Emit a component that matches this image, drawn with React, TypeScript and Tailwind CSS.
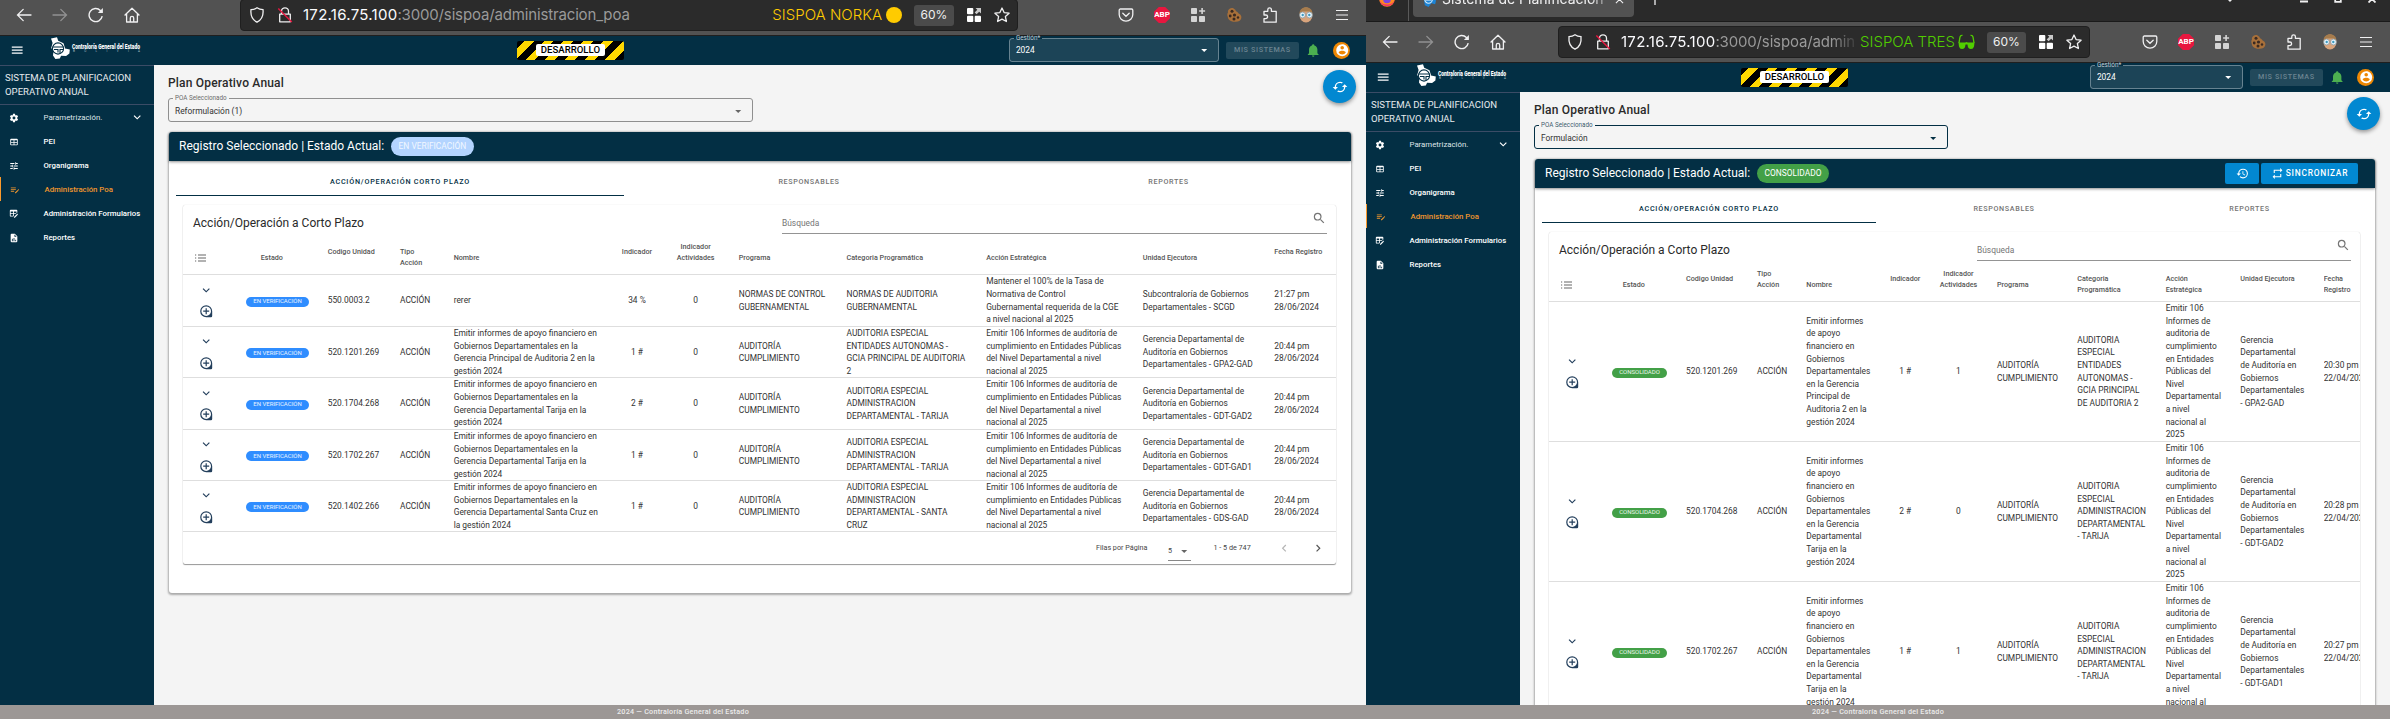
import React from "react";

const P = {
  menu: "M3,6H21V8H3V6M3,11H21V13H3V11M3,16H21V18H3V16Z",
  chevronDown: "M7.41,8.58L12,13.17L16.59,8.58L18,10L12,16L6,10L7.41,8.58Z",
  chevronLeft: "M15.41,16.58L10.83,12L15.41,7.41L14,6L8,12L14,18L15.41,16.58Z",
  chevronRight: "M8.59,16.58L13.17,12L8.59,7.41L10,6L16,12L10,18L8.59,16.58Z",
  menuDown: "M7,10L12,15L17,10H7Z",
  cog: "M12,15.5A3.5,3.5 0 0,1 8.5,12A3.5,3.5 0 0,1 12,8.5A3.5,3.5 0 0,1 15.5,12A3.5,3.5 0 0,1 12,15.5M19.43,12.97C19.47,12.65 19.5,12.33 19.5,12C19.5,11.67 19.47,11.34 19.43,11L21.54,9.37C21.73,9.22 21.78,8.95 21.66,8.73L19.66,5.27C19.54,5.05 19.27,4.96 19.05,5.05L16.56,6.05C16.04,5.66 15.5,5.32 14.87,5.07L14.5,2.42C14.46,2.18 14.25,2 14,2H10C9.75,2 9.54,2.18 9.5,2.42L9.13,5.07C8.5,5.32 7.96,5.66 7.44,6.05L4.95,5.05C4.73,4.96 4.46,5.05 4.34,5.27L2.34,8.73C2.21,8.95 2.27,9.22 2.46,9.37L4.57,11C4.53,11.34 4.5,11.67 4.5,12C4.5,12.33 4.53,12.65 4.57,12.97L2.46,14.63C2.27,14.78 2.21,15.05 2.34,15.27L4.34,18.73C4.46,18.95 4.73,19.03 4.95,18.95L7.44,17.94C7.96,18.34 8.5,18.68 9.13,18.93L9.5,21.58C9.54,21.82 9.75,22 10,22H14C14.25,22 14.46,21.82 14.5,21.58L14.87,18.93C15.5,18.67 16.04,18.34 16.56,17.94L19.05,18.95C19.27,19.03 19.54,18.95 19.66,18.73L21.66,15.27C21.78,15.05 21.73,14.78 21.54,14.63L19.43,12.97Z",
  table: "M5,4H19A2,2 0 0,1 21,6V18A2,2 0 0,1 19,20H5A2,2 0 0,1 3,18V6A2,2 0 0,1 5,4M5,8V12H11V8H5M13,8V12H19V8H13M5,14V18H11V14H5M13,14V18H19V14H13Z",
  tune: "M3,17V19H9V17H3M3,5V7H13V5H3M13,21V19H21V17H13V15H11V21H13M7,9V11H3V13H7V15H9V9H7M21,13V11H11V13H21M15,9H17V7H21V5H17V3H15V9Z",
  playlistEdit: "M2,6V8H14V6H2M2,10V12H14V10H2M20.04,10.13C19.9,10.13 19.76,10.19 19.65,10.3L18.65,11.3L20.7,13.35L21.7,12.35C21.92,12.14 21.92,11.79 21.7,11.58L20.42,10.3C20.31,10.19 20.18,10.13 20.04,10.13M18.07,11.88L12,17.94V20H14.06L20.12,13.93L18.07,11.88M2,14V16H10V14H2Z",
  tableEdit: "M21.7,13.35L20.7,14.35L18.65,12.3L19.65,11.3C19.86,11.08 20.21,11.08 20.42,11.3L21.7,12.58C21.92,12.79 21.92,13.14 21.7,13.35M12,18.94L18.07,12.88L20.12,14.93L14.06,21H12V18.94M4,2H18A2,2 0 0,1 20,4V8.17L16.17,12H12V16.17L10.17,18H4A2,2 0 0,1 2,16V4A2,2 0 0,1 4,2M4,6V10H10V6H4M12,6V10H18V6H12M4,12V16H10V12H4Z",
  fileChart: "M13,9H18.5L13,3.5V9M6,2H14L20,8V20A2,2 0 0,1 18,22H6C4.89,22 4,21.1 4,20V4C4,2.89 4.89,2 6,2M7,20H9V14H7V20M11,20H13V12H11V20M15,20H17V16H15V20Z",
  bell: "M21,19V20H3V19L5,17V11C5,7.9 7.03,5.17 10,4.29C10,4.19 10,4.1 10,4A2,2 0 0,1 12,2A2,2 0 0,1 14,4C14,4.1 14,4.19 14,4.29C16.97,5.17 19,7.9 19,11V17L21,19M14,21A2,2 0 0,1 12,23A2,2 0 0,1 10,21",
  account: "M12,19.2C9.5,19.2 7.29,17.92 6,16C6.03,14 10,12.9 12,12.9C14,12.9 17.97,14 18,16C16.71,17.92 14.5,19.2 12,19.2M12,5A3,3 0 0,1 15,8A3,3 0 0,1 12,11A3,3 0 0,1 9,8A3,3 0 0,1 12,5M12,2A10,10 0 0,0 2,12A10,10 0 0,0 12,22A10,10 0 0,0 22,12C22,6.47 17.5,2 12,2Z",
  cached: "M19,8L15,12H18A6,6 0 0,1 12,18C11,18 10.03,17.75 9.2,17.3L7.74,18.76C8.97,19.54 10.43,20 12,20A8,8 0 0,0 20,12H23M6,12A6,6 0 0,1 12,6C13,6 13.97,6.25 14.8,6.7L16.26,5.24C15.03,4.46 13.57,4 12,4A8,8 0 0,0 4,12H1L5,16L9,12",
  history: "M13.5,8H12V13L16.28,15.54L17,14.33L13.5,12.25V8M13,3A9,9 0 0,0 4,12H1L4.96,16.03L9,12H6A7,7 0 0,1 13,5A7,7 0 0,1 20,12A7,7 0 0,1 13,19C11.07,19 9.32,18.21 8.06,16.94L6.64,18.36C8.27,20 10.5,21 13,21A9,9 0 0,0 22,12A9,9 0 0,0 13,3",
  repeat: "M17,17H7V14L3,18L7,22V19H19V13H17M7,7H17V10L21,6L17,2V5H5V11H7V7Z",
  magnify: "M9.5,3A6.5,6.5 0 0,1 16,9.5C16,11.11 15.41,12.59 14.44,13.73L14.71,14H15.5L20.5,19L19,20.5L14,15.5V14.71L13.73,14.44C12.59,15.41 11.11,16 9.5,16A6.5,6.5 0 0,1 3,9.5A6.5,6.5 0 0,1 9.5,3M9.5,5C7,5 5,7 5,9.5C5,12 7,14 9.5,14C12,14 14,12 14,9.5C14,7 12,5 9.5,5Z",
  loupe: "M13,7H11V11H7V13H11V17H13V13H17V11H13V7M12,2A10,10 0 0,0 2,12A10,10 0 0,0 12,22H20A2,2 0 0,0 22,20V12A10,10 0 0,0 12,2M12,20A8,8 0 0,1 4,12A8,8 0 0,1 12,4A8,8 0 0,1 20,12A8,8 0 0,1 12,20",
};

function Icon({ d, className = "size-[14.4px]" }: { d: string; className?: string }) {
  return (
    <svg viewBox="0 0 24 24" className={`shrink-0 fill-current ${className}`}>
      <path d={d} />
    </svg>
  );
}

type Row = { state: string; cells: string[] };

type WindowConfig = {
  id: "left" | "right";
  bookmark: React.ReactNode;
  url: string;
  urlClass: string;
  width: string;
  urlBar: string;
  badgeGap: string;
  selectGap: string;
  selectWidth: string;
  poa: string;
  poaBox: string;
  poaLabel: string;
  chip: string;
  chipClass: string;
  rowChip: string;
  tabs: string;
  search: string;
  grid: string;
  cols: string[];
  headers: { t: string; c: string }[];
  rows: Row[];
  rowHeights: string[];
  card: string;
};

const S = "stroke-[#f0f0f1] fill-none";

function BackForward({ flip }: { flip?: boolean }) {
  return (
    <svg viewBox="0 0 16 16" className={flip ? "size-4 -scale-x-100 opacity-40" : "size-4"}>
      <path d="M15 8H1.6M7.2 2.4L1.5 8l5.7 5.6" className={S} strokeWidth="1.3" strokeLinecap="round" />
    </svg>
  );
}

function Toolbar({ w }: { w: WindowConfig }) {
  return (
    <div className="flex h-[41px] shrink-0 items-center border-b border-[#1f1f1f] bg-[#525252] pl-4">
      <div className="flex items-center gap-5">
        <BackForward />
        <BackForward flip />
        <svg viewBox="0 0 16 16" className="size-4">
          <path d="M14.2 9.2A6.6 6.6 0 1 1 12.4 3.4L14 5" className={S} strokeWidth="1.4" />
          <path d="M14.9 1v5H9.9z" fill="#f0f0f1" />
        </svg>
        <svg viewBox="0 0 16 16" className="size-4">
          <path d="M1 8L8 1.2 15 8M2.6 6.8V15h10.8V6.8M6.3 15v-4a1.7 1.7 0 0 1 3.4 0v4" className={S} strokeWidth="1.3" strokeLinejoin="round" strokeLinecap="round" />
        </svg>
      </div>
      <div className={`flex h-8 items-center rounded-[4px] border border-[#1f1f1f] bg-[#2b2b2b] pl-2 ${w.urlBar}`}>
        <svg viewBox="0 0 16 16" className="size-4 shrink-0">
          <path d="M8 .8c2 1.4 4 1.8 6 1.9.6 5.800-1.300 10.200-6 12.500C3.300 12.900 1.400 8.500 2 2.700 4 2.600 6 2.200 8 .8z" className={S} strokeWidth="1.3" />
        </svg>
        <svg viewBox="0 0 16 16" className="ml-3 size-4 shrink-0">
          <path d="M4.500 7V4.300a3.500 3.500 0 0 1 7 0V7M2.700 7.200h10.600v7.600H2.700z" className={S} strokeWidth="1.3" strokeLinejoin="round" />
          <path d="M1.300 1.500L14.800 15" stroke="#e8173f" strokeWidth="1.4" />
        </svg>
        <div className={`ml-[10px] whitespace-nowrap font-['Inter',sans-serif] text-[15px] leading-5 tracking-[-0.150px] text-[#9a9a9a] ${w.urlClass}`}>
          <span className="tracking-[0.270px] text-[#fbfbfe]">172.16.75.100</span>
          {w.url}
        </div>
        {w.bookmark}
        <div className="flex h-[21px] w-[40px] items-center justify-center rounded-[3px] bg-[#4b4b4b] font-['Inter',sans-serif] text-[12px] text-[#f0f0f1]">60%</div>
        <svg viewBox="0 0 14 14" className="ml-[13px] size-[14px] shrink-0" fill="#fff">
          <rect x="0" y="0" width="6.300" height="6.300" rx="1" />
          <rect x="0" y="7.700" width="6.300" height="6.300" rx="1" />
          <rect x="7.700" y="7.700" width="6.300" height="6.300" rx="1" />
          <path d="M8.500 0H14v5.500l-1.800-1.800-2.600 2.600-1.900-1.900 2.600-2.600z" opacity=".75" />
        </svg>
        <svg viewBox="0 0 16 16" className="ml-[13px] mr-[7px] size-4 shrink-0">
          <path d="M8 1l2.100 4.600 5 .6-3.700 3.400 1 4.900L8 12.100l-4.400 2.400 1-4.900L.9 6.200l5-.6z" className={S} strokeWidth="1.3" strokeLinejoin="round" />
        </svg>
      </div>
      <div className="ml-auto mr-4 flex items-center gap-5">
        <svg viewBox="0 0 16 16" className="size-4">
          <path d="M2.400 2h11.200a1.200 1.200 0 0 1 1.200 1.200v4.400a6.800 6.500 0 0 1-13.600 0V3.200A1.200 1.200 0 0 1 2.400 2zM4.800 6.200L8 9.300l3.200-3.100" className={S} strokeWidth="1.300" strokeLinecap="round" />
        </svg>
        <div className="flex size-4 items-center justify-center bg-[#e8173f] font-['Roboto',sans-serif] text-[8px] font-bold text-white [clip-path:polygon(30%_0,70%_0,100%_30%,100%_70%,70%_100%,30%_100%,0_70%,0_30%)]">ABP</div>
        <svg viewBox="0 0 16 16" className="size-4" fill="#d4d4d4">
          <rect x="1" y="1" width="6" height="6" rx=".8" />
          <rect x="1" y="9" width="6" height="6" rx=".8" />
          <rect x="9" y="9" width="6" height="6" rx=".8" />
          <path d="M11.300 1h1.600v2.200h2.200v1.600h-2.200V7h-1.600V4.800H9.100V3.200h2.200z" />
        </svg>
        <svg viewBox="0 0 16 16" className="size-4">
          <path d="M4 1.500c1.500-1 3.500-.5 4.500.8 1 .2 1 1.700 2 2.200 1.500.3 1.500 2 3 2.500 1.500 1 2.300 2.500 1.700 4.500-.8 2.300-3 3.500-6 3.300C5.500 15 2 13 1.800 10 1 8 1.300 6.500 2 5.500 1.500 4 2.500 2.300 4 1.500z" fill="#a8703a" />
          <circle cx="6" cy="4.200" r="1.500" fill="#3a2a22" />
          <circle cx="4.200" cy="9" r="1.400" fill="#3a2a22" />
          <circle cx="8.500" cy="8" r="1.600" fill="#3a2a22" />
          <circle cx="8" cy="12" r="1.500" fill="#3a2a22" />
          <circle cx="12" cy="10.500" r="1.200" fill="#3a2a22" />
        </svg>
        <svg viewBox="0 0 16 16" className="size-4">
          <path d="M2 4.300h3.800V2.600a1.800 1.800 0 0 1 3.600 0v1.700h4.800v10.900H2v-3.600h1.800a1.800 1.800 0 0 0 0-3.600H2z" className={S} strokeWidth="1.300" strokeLinejoin="round" />
        </svg>
        <svg viewBox="0 0 16 16" className="size-4">
          <ellipse cx="8" cy="8" rx="6.500" ry="7.500" fill="#d9a47c" />
          <path d="M1.500 7C1.500 2.500 4.500.3 8 .3S14.500 2.500 14.500 7L12 4.500H4z" fill="#a67c4d" />
          <circle cx="4.500" cy="8" r="2.900" fill="#e9f4fa" stroke="#6f8794" strokeWidth=".6" />
          <circle cx="11.500" cy="8" r="2.900" fill="#e9f4fa" stroke="#6f8794" strokeWidth=".6" />
          <circle cx="4.700" cy="8" r="1.200" fill="#3e9ac0" />
          <circle cx="11.300" cy="8" r="1.200" fill="#3e9ac0" />
        </svg>
        <svg viewBox="0 0 16 16" className="size-4">
          <path d="M2 3.500h12M2 8h12M2 12.500h12" className={S} strokeWidth="1.200" />
        </svg>
      </div>
    </div>
  );
}

function Favicon() {
  return (
    <svg viewBox="0 0 16 16" className="size-[15px] shrink-0">
      <path d="M2 1h8l1 5 4 3-1 4-4-1-3 4-4-2-1-6z" fill="#1c84d6" />
      <circle cx="7" cy="8" r="4" fill="none" stroke="#d8ecfa" strokeWidth="1.200" />
      <path d="M4 8.500h6" stroke="#d8ecfa" strokeWidth="1.300" />
    </svg>
  );
}

function TabStrip() {
  return (
    <div className="flex h-[22px] shrink-0 items-end overflow-hidden border-b border-[#1a1a1a] bg-[#2a2a2a]">
      <div className="flex h-[44px] flex-1 items-center">
        <div className="flex h-full w-[43px] items-center justify-center border-r border-[#5a5a5a]">
          <svg viewBox="0 0 16 16" className="size-4">
            <circle cx="8" cy="8" r="7.800" fill="#ff8a1f" />
            <path d="M.5 9a7.600 7.600 0 0 0 15 0c-1 3-4 4.500-7.500 4.500S1.500 12 .5 9z" fill="#f5326a" />
            <circle cx="8" cy="8.500" r="3.800" fill="#7b45e0" />
          </svg>
        </div>
        <div className="ml-[4px] flex h-[36px] w-[221px] items-center rounded-[4px] bg-[#525252] pl-[9px] pr-[10px]">
          <Favicon />
          <div className="ml-[5px] w-[169px] overflow-hidden whitespace-nowrap font-['Inter',sans-serif] text-[14px] leading-5 text-[#f0f0f1] [mask-image:linear-gradient(to_right,black_88%,transparent_102%)]">
            Sistema de Planificación
          </div>
          <svg viewBox="0 0 10 10" className="ml-[4px] size-[9px] shrink-0">
            <path d="M1 1l8 8M9 1L1 9" className={S} strokeWidth="1.200" />
          </svg>
        </div>
        <svg viewBox="0 0 12 12" className="ml-[15px] size-3">
          <path d="M6 0v12M0 6h12" className={S} strokeWidth="1.300" />
        </svg>
        <div className="ml-auto mr-[14px] flex items-center">
          <svg viewBox="0 0 8 6" className="mr-[66px] h-[6px] w-[8px]">
            <path d="M.5 1.500L4 5l3.500-3.500" className={S} strokeWidth="1.400" />
          </svg>
          <svg viewBox="0 0 8 8" className="mr-[26px] size-2">
            <path d="M0 6.500h8" className={S} strokeWidth="2" />
          </svg>
          <svg viewBox="0 0 8 8" className="mr-[26px] size-2">
            <path d="M1.200 1.200h5.600v5.600H1.200z" className={S} strokeWidth="1.800" />
          </svg>
          <svg viewBox="0 0 8 8" className="size-2">
            <path d="M.5.5l7 7M7.500.5l-7 7" className={S} strokeWidth="1.800" />
          </svg>
        </div>
      </div>
    </div>
  );
}

function Logo() {
  return (
    <svg viewBox="0 0 91 22" className="mt-[-6px] h-[22px] w-[91px] shrink-0">
      <path d="M1 1.500L7 .2l1.200 3.600 5.300 2.400 1.600 5.300 4.700 1-.4 4-3.300 2.600-5-.3-1.300 2.600-4.400.5L3 18.500l.5-4.500-2.300-3L2.600 6z" fill="#fff" />
      <circle cx="8" cy="11.500" r="5.600" fill="none" stroke="#032f44" strokeWidth="1.100" />
      <path d="M3 10h10.500M4 12.500h4v3M10 16v-3.500h3" fill="none" stroke="#032f44" strokeWidth="1.100" />
      <text x="22" y="11.500" textLength="68" lengthAdjust="spacingAndGlyphs" fill="#fff" className="font-['Roboto',sans-serif] text-[7px] font-black">
        Contraloría General del Estado
      </text>
      <text x="23" y="15.300" textLength="67" fill="#a9bac3" className="font-['Roboto',sans-serif] text-[3px]">
        BOLIVIA
      </text>
    </svg>
  );
}

function Header({ w }: { w: WindowConfig }) {
  return (
    <div className="flex h-[29px] shrink-0 items-center bg-[#032f44] text-white">
      <Icon d={P.menu} className="ml-[9.500px] mr-[26px] size-[14.400px]" />
      <Logo />
      <div className={`flex h-[19px] w-[107px] shrink-0 items-center justify-center rounded-[2px] bg-[repeating-linear-gradient(-45deg,#000_0,#000_7px,#ffd800_7px,#ffd800_14px)] ${w.badgeGap}`}>
        <span className="mb-[2px] rounded-[2px] bg-white px-[5px] text-[9.600px] font-medium leading-[12px] text-black">DESARROLLO</span>
      </div>
      <fieldset className={`mt-[-3px] flex h-[26px] shrink-0 rounded-[3px] border border-[#668290] ${w.selectGap} ${w.selectWidth}`}>
        <legend className="ml-[4px] px-[2px] text-[6.300px] leading-[5px] text-[#c3ced4]">Gestión*</legend>
        <div className="-mt-[2px] flex h-[22px] w-full items-center justify-between bg-white/10 pl-[6px] pr-[7px] text-[8.400px]">
          <span>2024</span>
          <Icon d={P.menuDown} />
        </div>
      </fieldset>
      <div className="ml-[7px] flex h-[17px] w-[73px] items-center justify-center rounded-[2px] bg-[#22495b] text-[7.200px] font-medium tracking-[0.640px] text-[#6b8491]">MIS SISTEMAS</div>
      <Icon d={P.bell} className="ml-[7px] size-[14.400px] text-[#4caf50]" />
      <div className="ml-[13px] flex size-[17px] items-center justify-center rounded-full bg-[#fb8c00]/95">
        <Icon d={P.account} className="size-[14.400px]" />
      </div>
    </div>
  );
}

const NAV = [
  { t: "Parametrización.", d: P.cog },
  { t: "PEI", d: P.table },
  { t: "Organigrama", d: P.tune },
  { t: "Administración Poa", d: P.playlistEdit },
  { t: "Administración Formularios", d: P.tableEdit },
  { t: "Reportes", d: P.fileChart },
];

function Sidebar() {
  return (
    <div className="w-[154px] shrink-0 border-t border-[#3b4c66] bg-[#032f44] text-white">
      <div className="h-[39px] border-b border-[#3b4c66] pl-[5px] pt-[5px] text-[9.600px] leading-[14px] text-[#e6ebee]">
        SISTEMA DE PLANIFICACION
        <br />
        OPERATIVO ANUAL
      </div>
      {NAV.map((n, i) => (
        <div
          key={n.t}
          className={
            i === 3
              ? "flex h-6 items-center border-l border-[#fb9a2c] pl-[9px] pt-px text-[7.800px] font-medium text-[#f0962e]"
              : "flex h-6 items-center pl-[9px] pt-px text-[7.800px] font-medium"
          }
        >
          <Icon d={n.d} className="size-[10px]" />
          <span className={i === 0 ? "ml-[24.500px] font-normal text-[#dfe5e9]" : "ml-[24.500px]"}>{n.t}</span>
          {i === 0 && <Icon d={P.chevronDown} className="ml-auto mr-[10px] size-[14.400px]" />}
        </div>
      ))}
    </div>
  );
}

function TableRow({ w, row, h }: { w: WindowConfig; row: Row; h: string }) {
  return (
    <div className={`grid shrink-0 items-center overflow-hidden border-b border-[#dedede] text-[8.400px] leading-[12.600px] text-[#333] ${w.grid} ${h}`}>
      <div className="flex flex-col items-center gap-[7px] text-[#233f5c]">
        <Icon d={P.chevronDown} />
        <Icon d={P.loupe} />
      </div>
      <div className={`flex justify-center pt-[2px] ${w.cols[0]}`}>
        <span className={`flex h-[10px] items-center rounded-full px-[6.900px] text-[6px] text-white/90 ${w.rowChip}`}>{row.state}</span>
      </div>
      {row.cells.map((c, i) => (
        <div key={i} className={`whitespace-pre ${w.cols[i + 1]}`}>
          {c}
        </div>
      ))}
    </div>
  );
}

function Page({ w }: { w: WindowConfig }) {
  const right = w.id === "right";
  return (
    <div className="relative flex min-w-0 flex-1 flex-col overflow-hidden bg-[#f4f4f4] px-[14px]">
      <div className="absolute right-[10px] top-[5px] flex size-[33px] items-center justify-center rounded-full bg-[#0288d1] text-white shadow-[0_2px_4px_rgba(0,0,0,0.400)]">
        <Icon d={P.cached} className="size-[16px]" />
      </div>
      <h1 className="mt-[9px] h-[17px] shrink-0 text-[12px] font-medium leading-[18px] tracking-[0.190px] text-[#2a2a2a]">Plan Operativo Anual</h1>
      <fieldset className={`mt-[3px] flex h-[28px] shrink-0 rounded-[3px] border ${w.poaBox}`}>
        <legend className={`ml-[4px] px-[2px] text-[6.300px] leading-[8px] ${w.poaLabel}`}>POA Seleccionado</legend>
        <div className="-mt-[1px] flex h-[20px] w-full items-center justify-between pl-[6px] pr-[7px] text-[8.400px] text-[#333]">
          <span>{w.poa}</span>
          <Icon d={P.menuDown} className={right ? "size-[14.400px] text-[#032f44]" : "size-[14.400px] text-[#666]"} />
        </div>
      </fieldset>
      <div className={`ml-px mr-px mt-[10px] flex shrink-0 flex-col rounded-[3px] bg-white shadow-[0_1px_2px_1px_rgba(0,0,0,0.300)] ${w.card}`}>
        <div className="flex h-[29px] shrink-0 items-center rounded-t-[3px] bg-[#032f44] pl-[10px] text-[12px] text-white shadow-[0_1px_3px_rgba(0,0,0,0.450)]">
          <span className="mt-[-2px] w-[212px] whitespace-nowrap">Registro Seleccionado | Estado Actual:</span>
          <span className={`flex h-[19px] items-center rounded-full text-[8.400px] ${w.chipClass}`}>{w.chip}</span>
          {right && (
            <div className="ml-auto mr-[17px] flex gap-[2px]">
              <div className="flex h-[21px] w-[34px] items-center justify-center rounded-[2px] bg-[#0288d1]">
                <Icon d={P.history} className="size-[13px]" />
              </div>
              <div className="flex h-[21px] w-[97px] items-center justify-center gap-[2px] rounded-[2px] bg-[#0288d1] text-[8.400px] font-medium tracking-[0.750px]">
                <Icon d={P.repeat} className="size-[13px]" />
                SINCRONIZAR
              </div>
            </div>
          )}
        </div>
        <div className={`ml-[7px] grid h-[35px] shrink-0 text-center text-[7.200px] font-medium leading-[42px] tracking-[0.640px] text-[#757575] ${w.tabs}`}>
          <div className="h-[35px] border-b border-[#032f44] tracking-[0.800px] text-[#032f44]">ACCIÓN/OPERACIÓN CORTO PLAZO</div>
          <div>RESPONSABLES</div>
          <div>REPORTES</div>
        </div>
        <div className="ml-[14px] mr-[15px] mt-[9px] flex flex-col rounded-[2px] shadow-[0_1px_1px_rgba(0,0,0,0.400),0_0_1px_rgba(0,0,0,0.200)]">
          <div className="flex h-[29px] shrink-0 pl-[10px] pr-[9px]">
            <div className="mt-[9px] h-[18px] flex-1 text-[12px] leading-[19px] text-[#2a2a2a]">Acción/Operación a Corto Plazo</div>
            <div className={`flex items-center justify-between border-b border-[#949494] pt-[8px] text-[8.400px] text-[#757575] ${w.search}`}>
              <span>Búsqueda</span>
              <Icon d={P.magnify} className="-mt-[9px] mr-[1px] size-[14.400px]" />
            </div>
          </div>
          <div className={`grid h-[41px] shrink-0 border-b border-[#dedede] text-[7.200px] font-medium leading-[11px] text-[#555] ${w.grid}`}>
            <div className="pl-[11px] pt-[19px]">
              <svg viewBox="0 0 15 10" className="h-[10px] w-[15px]">
                <path d="M1 2h1.200M1 5h1.200M1 8h1.200M4 2h8M4 5h8M4 8h8" stroke="#666" strokeWidth="1.100" />
              </svg>
            </div>
            {w.headers.map((h, i) => (
              <div key={i} className={`whitespace-pre ${i === 0 ? "text-center" : w.cols[i]} ${h.c}`}>
                {h.t}
              </div>
            ))}
          </div>
          {w.rows.map((r, i) => (
            <TableRow key={i} w={w} row={r} h={w.rowHeights[i]} />
          ))}
          {!right && (
            <div className="flex h-[32px] items-center pt-px text-[7.200px] text-[#444]">
              <span className="ml-[913px] w-[72px]">Filas por Página</span>
              <div className="mt-[6px] flex h-[19px] w-[23px] items-center justify-between border-b border-[#888]">
                <span>5</span>
                <Icon d={P.menuDown} className="size-[14.400px] text-[#666]" />
              </div>
              <span className="ml-[22.500px] w-[63px]">1 - 5 de 747</span>
              <Icon d={P.chevronLeft} className="size-[14.400px] text-[#b5b5b5]" />
              <Icon d={P.chevronRight} className="ml-[20px] size-[14.400px] text-[#555]" />
            </div>
          )}
        </div>
      </div>
    </div>
  );
}

const c = "text-center";
const A = "pt-[7px]";
const B = "pt-[12px]";
const C = "pt-[18px]";

const strategic = "Emitir 106 Informes de auditoría de\ncumplimiento en Entidades Públicas\ndel Nivel Departamental a nivel\nnacional al 2025";
const strategicNarrow = "Emitir 106\nInformes de\nauditoria de\ncumplimiento\nen Entidades\nPúblicas del\nNivel\nDepartamental\na nivel\nnacional al\n2025";
const nameNarrow = "Emitir informes\nde apoyo\nfinanciero en\nGobiernos\nDepartamentales\nen la Gerencia\n";

const LEFT: WindowConfig = {
  id: "left",
  width: "w-[1366px]",
  url: ":3000/sispoa/administracion_poa",
  urlClass: "flex-1",
  bookmark: (
    <div className="mr-[12px] flex items-center font-['Inter',sans-serif] text-[15px] font-light text-[#ffcb00]">
      SISPOA NORKA
      <span className="ml-[4px] size-4 rounded-full bg-[#ffcb00]" />
    </div>
  ),
  urlBar: "ml-[100px] w-[778px]",
  badgeGap: "ml-[376px]",
  selectGap: "ml-[385px]",
  selectWidth: "w-[210px]",
  poa: "Reformulación (1)",
  poaBox: "w-[585px] border-[#8f8f8f]",
  poaLabel: "text-[#6b6b6b]",
  chip: "EN VERIFICACIÓN",
  chipClass: "bg-[#b3d4ff] px-[7.600px] text-[#f1f7ff]",
  rowChip: "bg-[#2f8dff]",
  tabs: "grid-cols-[448px_370px_349px]",
  search: "w-[545px]",
  grid: "grid-cols-[46px_98.700px_72.300px_53.700px_156.300px_54px_63.400px_119.200px_139.600px_156.600px_131.600px_61.600px]",
  cols: [`${c} pr-[1.700px]`, "", "", "", c, c, "pl-[11.400px]", "", "", "", ""],
  headers: [
    { t: "Estado", c: "pt-[18px] pr-[13px]" },
    { t: "Codigo Unidad", c: B },
    { t: "Tipo\nAcción", c: B },
    { t: "Nombre", c: C },
    { t: "Indicador", c: B },
    { t: "Indicador\nActividades", c: A },
    { t: "Programa", c: C },
    { t: "Categoria Programática", c: C },
    { t: "Acción Estratégica", c: C },
    { t: "Unidad Ejecutora", c: C },
    { t: "Fecha Registro", c: B },
  ],
  rows: [
    { state: "EN VERIFICACIÓN", cells: ["550.0003.2", "ACCIÓN", "rerer", "34 %", "0", "NORMAS DE CONTROL\nGUBERNAMENTAL", "NORMAS DE AUDITORIA\nGUBERNAMENTAL", "Mantener el 100% de la Tasa de\nNormativa de Control\nGubernamental requerida de la CGE\na nivel nacional al 2025", "Subcontraloría de Gobiernos\nDepartamentales - SCGD", "21:27 pm\n28/06/2024"] },
    { state: "EN VERIFICACIÓN", cells: ["520.1201.269", "ACCIÓN", "Emitir informes de apoyo financiero en\nGobiernos Departamentales en la\nGerencia Principal de Auditoria 2 en la\ngestión 2024", "1 #", "0", "AUDITORÍA\nCUMPLIMIENTO", "AUDITORIA ESPECIAL\nENTIDADES AUTONOMAS -\nGCIA PRINCIPAL DE AUDITORIA\n2", strategic, "Gerencia Departamental de\nAuditoría en Gobiernos\nDepartamentales - GPA2-GAD", "20:44 pm\n28/06/2024"] },
    { state: "EN VERIFICACIÓN", cells: ["520.1704.268", "ACCIÓN", "Emitir informes de apoyo financiero en\nGobiernos Departamentales en la\nGerencia Departamental Tarija en la\ngestión 2024", "2 #", "0", "AUDITORÍA\nCUMPLIMIENTO", "AUDITORIA ESPECIAL\nADMINISTRACION\nDEPARTAMENTAL - TARIJA", strategic, "Gerencia Departamental de\nAuditoría en Gobiernos\nDepartamentales - GDT-GAD2", "20:44 pm\n28/06/2024"] },
    { state: "EN VERIFICACIÓN", cells: ["520.1702.267", "ACCIÓN", "Emitir informes de apoyo financiero en\nGobiernos Departamentales en la\nGerencia Departamental Tarija en la\ngestión 2024", "1 #", "0", "AUDITORÍA\nCUMPLIMIENTO", "AUDITORIA ESPECIAL\nADMINISTRACION\nDEPARTAMENTAL - TARIJA", strategic, "Gerencia Departamental de\nAuditoría en Gobiernos\nDepartamentales - GDT-GAD1", "20:44 pm\n28/06/2024"] },
    { state: "EN VERIFICACIÓN", cells: ["520.1402.266", "ACCIÓN", "Emitir informes de apoyo financiero en\nGobiernos Departamentales en la\nGerencia Departamental Santa Cruz en\nla gestión 2024", "1 #", "0", "AUDITORÍA\nCUMPLIMIENTO", "AUDITORIA ESPECIAL\nADMINISTRACION\nDEPARTAMENTAL - SANTA\nCRUZ", strategic, "Gerencia Departamental de\nAuditoría en Gobiernos\nDepartamentales - GDS-GAD", "20:44 pm\n28/06/2024"] },
  ],
  rowHeights: ["h-[52px]", "h-[51px]", "h-[52px]", "h-[51px]", "h-[51px]"],
  card: "h-[461px]",
};

const RIGHT: WindowConfig = {
  id: "right",
  width: "w-[1024px]",
  url: ":3000/sispoa/admin",
  urlClass: "w-[239px] shrink-0 [mask-image:linear-gradient(to_right,black_88%,transparent_100%)]",
  bookmark: (
    <div className="ml-auto mr-[12px] flex items-center whitespace-nowrap font-['Inter',sans-serif] text-[15px] font-light text-[#51cd00]">
      SISPOA TRES
      <svg viewBox="0 0 17 16" className="ml-[3px] h-4 w-[17px]">
        <path d="M1 9L2 3q.5-2 2.500-1.600M16 9l-1-6q-.5-2-2.500-1.600" fill="none" stroke="#51cd00" strokeWidth="1.300" />
        <path d="M.5 8.500h6.700q1.300-1 2.600 0h6.700l-.5 4q-.6 2.500-3 2.500-3.300 0-3.500-4.500h-2Q7.300 15 4 15q-2.400 0-3-2.500z" fill="#51cd00" />
      </svg>
    </div>
  ),
  urlBar: "ml-[52px] w-[532px]",
  badgeGap: "ml-[234px]",
  selectGap: "ml-[242px]",
  selectWidth: "w-[153px]",
  poa: "Formulación",
  poaBox: "w-[414px] border-[#032f44]",
  poaLabel: "text-[#032f44]/80",
  chip: "CONSOLIDADO",
  chipClass: "bg-[#43a047] px-[7.600px] text-white",
  rowChip: "bg-[#43a047]",
  tabs: "grid-cols-[334px_256px_235px]",
  search: "w-[374px]",
  grid: "grid-cols-[46.600px_90.400px_71px_49.300px_72px_54px_52.400px_92.600px_88.400px_74.600px_83.400px_36.300px]",
  cols: [`${c} pr-[2.600px]`, "", "", "", c, c, "pl-[12.300px]", "", "", "", "overflow-hidden"],
  headers: [
    { t: "Estado", c: "pt-[18px] pr-[14px]" },
    { t: "Codigo Unidad", c: B },
    { t: "Tipo\nAcción", c: A },
    { t: "Nombre", c: C },
    { t: "Indicador", c: B },
    { t: "Indicador\nActividades", c: A },
    { t: "Programa", c: C },
    { t: "Categoria\nProgramática", c: B },
    { t: "Acción\nEstratégica", c: B },
    { t: "Unidad Ejecutora", c: B },
    { t: "Fecha\nRegistro", c: B },
  ],
  rows: [
    { state: "CONSOLIDADO", cells: ["520.1201.269", "ACCIÓN", nameNarrow + "Principal de\nAuditoria 2 en la\ngestión 2024", "1 #", "1", "AUDITORÍA\nCUMPLIMIENTO", "AUDITORIA\nESPECIAL\nENTIDADES\nAUTONOMAS -\nGCIA PRINCIPAL\nDE AUDITORIA 2", strategicNarrow, "Gerencia\nDepartamental\nde Auditoría en\nGobiernos\nDepartamentales\n- GPA2-GAD", "20:30 pm\n22/04/2024"] },
    { state: "CONSOLIDADO", cells: ["520.1704.268", "ACCIÓN", nameNarrow + "Departamental\nTarija en la\ngestión 2024", "2 #", "0", "AUDITORÍA\nCUMPLIMIENTO", "AUDITORIA\nESPECIAL\nADMINISTRACION\nDEPARTAMENTAL\n- TARIJA", strategicNarrow, "Gerencia\nDepartamental\nde Auditoría en\nGobiernos\nDepartamentales\n- GDT-GAD2", "20:28 pm\n22/04/2024"] },
    { state: "CONSOLIDADO", cells: ["520.1702.267", "ACCIÓN", nameNarrow + "Departamental\nTarija en la\ngestión 2024", "1 #", "1", "AUDITORÍA\nCUMPLIMIENTO", "AUDITORIA\nESPECIAL\nADMINISTRACION\nDEPARTAMENTAL\n- TARIJA", strategicNarrow, "Gerencia\nDepartamental\nde Auditoría en\nGobiernos\nDepartamentales\n- GDT-GAD1", "20:27 pm\n22/04/2024"] },
  ],
  rowHeights: ["h-[140px]", "h-[140px]", "h-[140px]"],
  card: "h-[620px]",
};

function BrowserWindow({ w }: { w: WindowConfig }) {
  return (
    <div className={`flex h-[719px] shrink-0 flex-col overflow-hidden ${w.width}`}>
      {w.id === "right" ? <TabStrip /> : <div className="-mt-[5px]" />}
      <Toolbar w={w} />
      <Header w={w} />
      <div className="flex min-h-0 flex-1 overflow-hidden">
        <Sidebar />
        <Page w={w} />
      </div>
      <div className="h-[14px] shrink-0 bg-[#9c9795] text-center text-[7.200px] font-medium leading-[14px] tracking-[0.240px] text-[#ececec]">
        2024 — Contraloría General del Estado
      </div>
    </div>
  );
}

export default function App() {
  return (
    <div className="flex h-[719px] w-[2390px] overflow-hidden font-['Roboto',sans-serif]">
      <BrowserWindow w={LEFT} />
      <BrowserWindow w={RIGHT} />
    </div>
  );
}
